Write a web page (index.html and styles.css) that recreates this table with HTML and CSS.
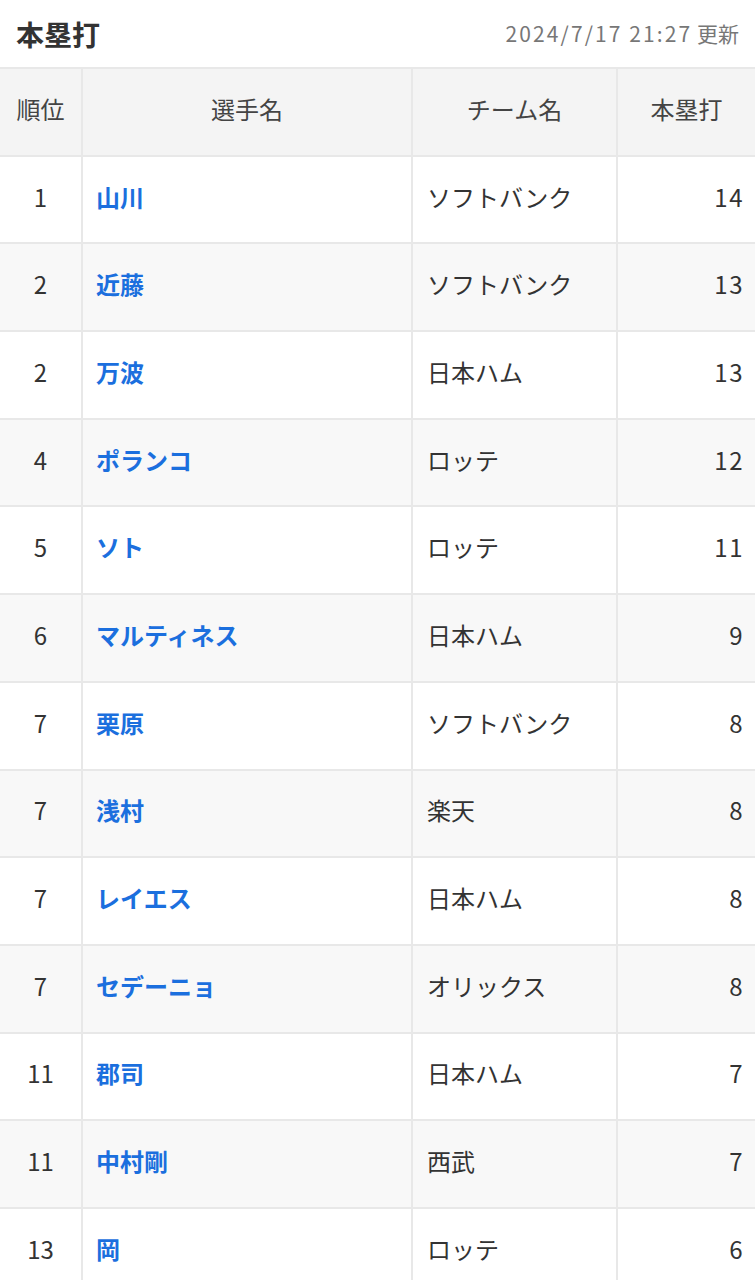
FILE: index.html
```html
<!DOCTYPE html>
<html lang="ja">
<head>
<meta charset="utf-8">
<title>本塁打</title>
<link rel="stylesheet" href="styles.css">
</head>
<body>
<div class="head">
  <h1 class="title">本塁打</h1>
  <span class="updated"><span class="ts">2024/7/17 21:27</span> 更新</span>
</div>
<table class="rank">
  <colgroup>
    <col class="c-rank"><col class="c-name"><col class="c-team"><col class="c-hr">
  </colgroup>
  <thead>
    <tr><th>順位</th><th>選手名</th><th>チーム名</th><th>本塁打</th></tr>
  </thead>
  <tbody>
    <tr><td class="r">1</td><td class="n"><a href="#">山川</a></td><td class="t">ソフトバンク</td><td class="v">14</td></tr>
    <tr><td class="r">2</td><td class="n"><a href="#">近藤</a></td><td class="t">ソフトバンク</td><td class="v">13</td></tr>
    <tr><td class="r">2</td><td class="n"><a href="#">万波</a></td><td class="t">日本ハム</td><td class="v">13</td></tr>
    <tr><td class="r">4</td><td class="n"><a href="#">ポランコ</a></td><td class="t">ロッテ</td><td class="v">12</td></tr>
    <tr><td class="r">5</td><td class="n"><a href="#">ソト</a></td><td class="t">ロッテ</td><td class="v">11</td></tr>
    <tr><td class="r">6</td><td class="n"><a href="#">マルティネス</a></td><td class="t">日本ハム</td><td class="v">9</td></tr>
    <tr><td class="r">7</td><td class="n"><a href="#">栗原</a></td><td class="t">ソフトバンク</td><td class="v">8</td></tr>
    <tr><td class="r">7</td><td class="n"><a href="#">浅村</a></td><td class="t">楽天</td><td class="v">8</td></tr>
    <tr><td class="r">7</td><td class="n"><a href="#">レイエス</a></td><td class="t">日本ハム</td><td class="v">8</td></tr>
    <tr><td class="r">7</td><td class="n"><a href="#">セデーニョ</a></td><td class="t">オリックス</td><td class="v">8</td></tr>
    <tr><td class="r">11</td><td class="n"><a href="#">郡司</a></td><td class="t">日本ハム</td><td class="v">7</td></tr>
    <tr><td class="r">11</td><td class="n"><a href="#">中村剛</a></td><td class="t">西武</td><td class="v">7</td></tr>
    <tr><td class="r">13</td><td class="n"><a href="#">岡</a></td><td class="t">ロッテ</td><td class="v">6</td></tr>
  </tbody>
</table>
</body>
</html>
```

FILE: styles.css
```css
html, body {
  margin: 0;
  padding: 0;
  background: #fff;
}
body {
  font-family: "Noto Sans CJK JP", "Noto Sans", sans-serif;
  color: #333;
  width: 755px;
  overflow: hidden;
}
.head {
  height: 67px;
  display: flex;
  align-items: center;
  justify-content: space-between;
  padding: 0 16px;
}
.title {
  margin: 0;
  font-size: 28px;
  font-weight: 700;
  color: #333;
  line-height: 1;
}
.updated {
  font-size: 21px;
  color: #777;
  line-height: 1;
}
.ts {
  letter-spacing: 2.1px;
}
.rank {
  width: 755px;
  border-collapse: collapse;
  table-layout: fixed;
}
.c-rank { width: 82px; }
.c-name { width: 330px; }
.c-team { width: 205px; }
.c-hr { width: 138px; }
.rank th, .rank td {
  border: 2px solid #e8e8e8;
  height: 79.7px;
  padding: 0 0 6px;
  font-size: 24px;
  font-weight: 400;
  line-height: 1;
}
.rank th:first-child, .rank td:first-child { border-left: none; }
.rank th:last-child, .rank td:last-child { border-right: none; }
.rank thead th {
  background: #f4f4f4;
  color: #444;
  text-align: center;
}
.rank tbody tr:nth-child(even) td { background: #f8f8f8; }
.rank .r {
  text-align: center;
  color: #333;
}
.rank .n { padding-left: 13px; }
.rank .n a {
  color: #1b6fde;
  font-weight: 700;
  text-decoration: none;
}
.rank .t { padding-left: 14px; color: #333; }
.rank .v {
  text-align: right;
  padding-right: 11px;
  color: #333;
  letter-spacing: 1.5px;
}
```
